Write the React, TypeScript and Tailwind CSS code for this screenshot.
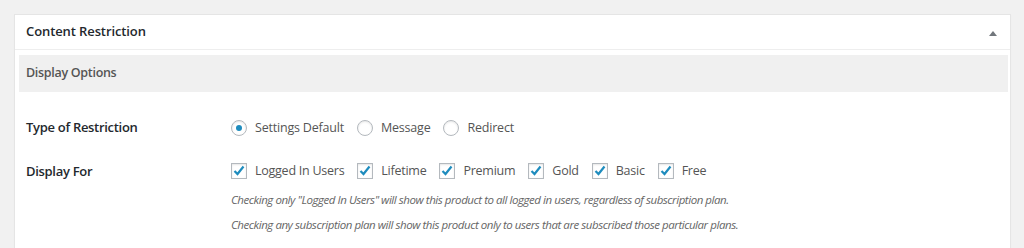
import { useState } from "react"

const font = { fontFamily: '"Open Sans", "Noto Sans", Arial, sans-serif' }

function Radio({ label, checked }: { label: string, checked?: boolean }) {
    return (
        <label className="flex items-center mr-[13px]">
            <span className="size-[16px] rounded-full border border-[#b4b9be] bg-white shadow-[inset_0_1px_2px_rgba(0,0,0,0.1)] flex items-center justify-center mr-[8px]">
                {checked && <span className="size-[6px] rounded-full bg-[#1e8cbe]" />}
            </span>
            <span className="text-[12.5px] tracking-[-0.2px] text-[#555]">{label}</span>
        </label>
    )
}

function Check({ label }: { label: string }) {
    return (
        <label className="flex items-center mr-[13px]">
            <span className="size-[16px] border border-[#b4b9be] bg-white shadow-[inset_0_1px_2px_rgba(0,0,0,0.1)] flex items-center justify-center mr-[8px]">
                <svg width="14" height="14" viewBox="0 0 14 14">
                    <path d="M2.5 7 L5.5 10 L11.5 2.5" fill="none" stroke="#1e8cbe" strokeWidth="2.2" />
                </svg>
            </span>
            <span className="text-[12.5px] tracking-[-0.25px] text-[#555]">{label}</span>
        </label>
    )
}

function App() {
    const [plans] = useState(["Logged In Users", "Lifetime", "Premium", "Gold", "Basic", "Free"])

    return (
        <div className="w-[1024px] h-[248px] overflow-hidden bg-[#f1f1f1] pt-[14px] pl-[14px] pr-[13px]" style={font}>
            <div className="bg-white border border-[#e5e5e5] shadow-[0_1px_1px_rgba(0,0,0,0.04)] h-[260px]">
                {/* header */}
                <div className="h-[35px] flex items-center justify-between pl-[11px] pr-[12px] border-b border-[#eeeeee]">
                    <span className="text-[13px] tracking-[-0.1px] font-semibold text-[#23282d]">Content Restriction</span>
                    <svg width="10" height="8" viewBox="0 0 10 8" className="mt-[1px]">
                        <path d="M1 7 L5 2 L9 7 Z" fill="#72777c" />
                    </svg>
                </div>

                {/* body */}
                <div className="pt-[5px] pl-[4px] pr-[2px]">
                    <div className="h-[37px] bg-[#f0f0f0] pl-[7px] flex items-center">
                        <span className="text-[12.5px] tracking-[-0.3px] font-semibold text-[#555]">Display Options</span>
                    </div>

                    <div className="pl-[7px]">
                        <div className="flex items-center pt-[27px] h-[45px]">
                            <div className="w-[205px] text-[13px] tracking-[-0.3px] font-semibold text-[#23282d]">Type of Restriction</div>
                            <div className="flex items-center">
                                <Radio label="Settings Default" checked />
                                <Radio label="Message" />
                                <Radio label="Redirect" />
                            </div>
                        </div>

                        <div className="flex pt-[25px]">
                            <div className="w-[205px] text-[13px] tracking-[-0.3px] font-semibold text-[#23282d] leading-[18px]">Display For</div>
                            <div>
                                <div className="flex items-center h-[18px]">
                                    {plans.map((p) => <Check key={p} label={p} />)}
                                </div>
                                <div className="mt-[7px] text-[11.5px] tracking-[-0.45px] italic text-[#666] leading-[25px]">
                                    <div>Checking only "Logged In Users" will show this product to all logged in users, regardless of subscription plan.</div>
                                    <div>Checking any subscription plan will show this product only to users that are subscribed those particular plans.</div>
                                </div>
                            </div>
                        </div>
                    </div>
                </div>
            </div>
        </div>
    )
}

export default App
